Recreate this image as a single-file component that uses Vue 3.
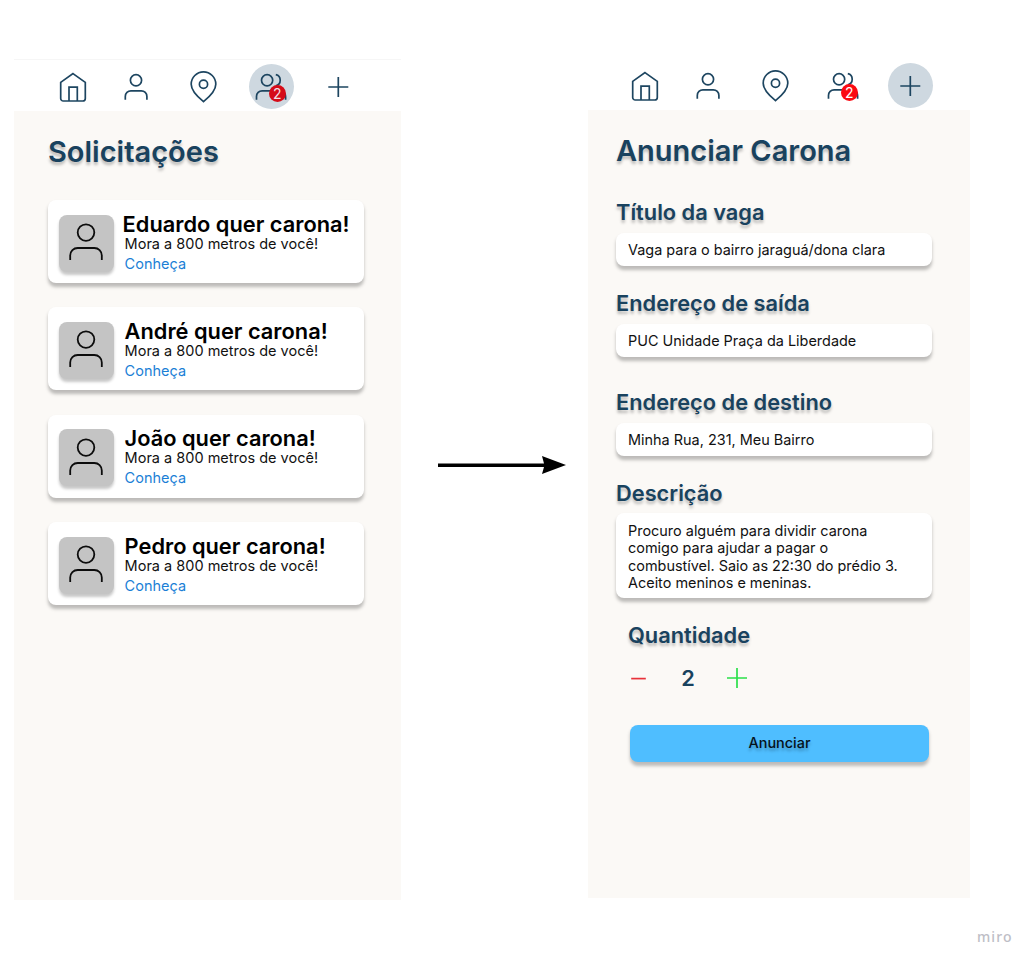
<script setup>
const navIcons = ['home', 'user', 'pin', 'users', 'plus']

const screens = [
  { id: 'requests', active: 'users', title: 'Solicitações' },
  { id: 'publish', active: 'plus', title: 'Anunciar Carona' },
]

const requests = [
  { id: 'eduardo', name: 'Eduardo' },
  { id: 'andre', name: 'André' },
  { id: 'joao', name: 'João' },
  { id: 'pedro', name: 'Pedro' },
]

const fields = [
  { id: 'headline', label: 'Título da vaga', value: ['Vaga para o bairro jaraguá/dona clara'] },
  { id: 'from', label: 'Endereço de saída', value: ['PUC Unidade Praça da Liberdade'] },
  { id: 'to', label: 'Endereço de destino', value: ['Minha Rua, 231, Meu Bairro'] },
  {
    id: 'description',
    label: 'Descrição',
    value: [
      'Procuro alguém para dividir carona',
      'comigo para ajudar a pagar o',
      'combustível. Saio as 22:30 do prédio 3.',
      'Aceito meninos e meninas.',
    ],
  },
]
</script>

<template>
  <main class="board">
    <section v-for="screen in screens" :key="screen.id" class="screen" :class="screen.id">
      <nav class="nav">
        <a v-for="icon in navIcons" :key="icon" class="nav-item" :class="{ active: icon === screen.active }">
          <svg class="icon" viewBox="0 0 45 45">
            <template v-if="icon === 'home'">
              <path d="M22 9.6 L34.3 18.4 V34.4 a2.6 2.6 0 0 1 -2.6 2.6 H12.3 a2.6 2.6 0 0 1 -2.6 -2.6 V18.4 Z" />
              <path d="M18 37 V23.2 H26.3 V37" />
            </template>
            <template v-else-if="icon === 'user'">
              <circle cx="22" cy="16.3" r="5.6" />
              <path d="M11.3 35.8 V32.4 a5.6 5.6 0 0 1 5.6 -5.6 H27.3 a5.6 5.6 0 0 1 5.6 5.6 V35.8" />
            </template>
            <template v-else-if="icon === 'pin'">
              <circle cx="22.5" cy="20.2" r="4.1" />
              <path d="M22.5 37.6 C18.3 34.2 10.2 27.5 10.2 20.2 A12.3 12.3 0 0 1 34.8 20.2 C34.8 27.5 26.7 34.2 22.5 37.6 Z" />
            </template>
            <template v-else-if="icon === 'users'">
              <circle cx="18.1" cy="16.3" r="5.6" />
              <path d="M7.5 35.8 V32.4 a5.6 5.6 0 0 1 5.6 -5.6 H23.4 a5.6 5.6 0 0 1 5.6 5.6 V35.8" />
              <path d="M26.8 10.7 a5.7 5.7 0 0 1 0 11.1" />
              <path d="M33 27.3 a6 6 0 0 1 3.6 5.6 V35.8" />
            </template>
            <path v-else d="M12.3 23 H32.3 M22.3 13 V33" />
          </svg>
          <span v-if="icon === 'users'" class="badge">2</span>
        </a>
      </nav>

      <div class="panel">
        <h1 class="title">{{ screen.title }}</h1>

        <div v-if="screen.id === 'requests'" class="cards">
          <article v-for="r in requests" :key="r.id" class="card">
            <div class="avatar">
              <svg class="avatar-icon" viewBox="0 0 34 38">
                <circle cx="17" cy="9.6" r="8.3" />
                <path d="M1.2 37 V32.5 a7.5 7.5 0 0 1 7.5 -7.5 H25.3 a7.5 7.5 0 0 1 7.5 7.5 V37" />
              </svg>
            </div>
            <div class="info">
              <h2 class="name" :class="r.id">{{ r.name }} quer carona!</h2>
              <p class="distance">Mora a 800 metros de você!</p>
              <a class="more">Conheça</a>
            </div>
          </article>
        </div>

        <form v-else class="form">
          <div v-for="f in fields" :key="f.id" class="field" :class="f.id">
            <h3 class="label">{{ f.label }}</h3>
            <div class="input">
              <div v-for="line in f.value" :key="line">{{ line }}</div>
            </div>
          </div>
          <div class="quantity">
            <h3 class="label">Quantidade</h3>
            <div class="stepper">
              <svg class="step minus" viewBox="0 0 20 20"><path d="M2.2 10.6 H16.8" /></svg>
              <span class="count">2</span>
              <svg class="step plus" viewBox="0 0 20 20"><path d="M0 10 H20 M10 0 V20" /></svg>
            </div>
          </div>
          <button type="button" class="submit">Anunciar</button>
        </form>
      </div>
    </section>

    <svg class="arrow" viewBox="0 0 130 20">
      <path d="M0 8.4 H106 L104 1 L128 10 L104 19 L106 12 H0 Z" />
    </svg>
    <div class="brand">miro</div>
  </main>
</template>

<style>
body {
  margin: 0;
  background: #fff;
}
</style>

<style scoped>
.board {
  box-sizing: border-box;
  position: relative;
  display: flex;
  align-items: flex-start;
  gap: 187px;
  width: 1034px;
  height: 966px;
  padding-left: 14px;
  overflow: hidden;
  background: #fff;
  font-family: Inter, "Liberation Sans", sans-serif;
  color: #111;
}

h1, h2, h3, p {
  margin: 0;
  font-weight: 600;
  white-space: nowrap;
}

.screen {
  display: flex;
  flex-direction: column;
}
.requests { width: 387px; padding-top: 59px; }
.publish { width: 382px; padding-top: 58px; }

.nav {
  box-sizing: border-box;
  display: grid;
  grid-template-columns: 58px 68px 67px 68px 67px;
  justify-items: center;
  height: 52px;
  padding-top: 5px;
}
.requests .nav { padding-left: 30px; border-top: 1px solid #f6f6f6; padding-top: 4px; }
.publish .nav { padding-left: 28px; }

.nav-item {
  position: relative;
  width: 45px;
  height: 45px;
  border-radius: 50%;
}
.nav-item.active { background: #ced8e0; }

.icon {
  display: block;
  width: 45px;
  height: 45px;
  fill: none;
  stroke: #1d4560;
  stroke-width: 1.7;
}

.badge {
  position: absolute;
  left: 20.3px;
  top: 21.2px;
  width: 17px;
  height: 17px;
  border-radius: 50%;
  background: #fb0a12;
  color: #fff;
  font-size: 14px;
  line-height: 17px;
  text-align: center;
}
.active .badge { background: #d50b18; color: #f0dfe3; }

.panel {
  box-sizing: border-box;
  background: #fbf9f6;
}
.requests .panel { height: 789px; padding: 23px 0 0 34px; }
.publish .panel { height: 788px; padding: 23px 0 0 28px; }

.title {
  height: 35px;
  font-size: 29px;
  line-height: 35px;
  color: #19425e;
  text-shadow: 0 3px 3px rgba(0, 0, 0, 0.25);
}

.cards {
  display: flex;
  flex-direction: column;
  gap: 24.4px;
  padding-top: 31px;
}
.card {
  box-sizing: border-box;
  display: flex;
  width: 315.5px;
  height: 83px;
  padding: 14.5px 0 0 11.3px;
  border-radius: 8px;
  background: #fff;
  box-shadow: 0 3.5px 3.5px rgba(0, 0, 0, 0.25);
}
.avatar {
  box-sizing: border-box;
  width: 55px;
  height: 57px;
  padding: 8.4px 0 0 10px;
  border-radius: 8px;
  background: #c4c4c4;
  box-shadow: 0 3px 3px rgba(0, 0, 0, 0.22);
}
.avatar-icon {
  display: block;
  width: 34px;
  height: 38px;
  fill: none;
  stroke: #0c0c0c;
  stroke-width: 1.8;
}
.info { padding-left: 10.3px; }
.name {
  height: 20px;
  font-size: 21.8px;
  line-height: 18.6px;
  color: #000;
}
.name.eduardo { margin-left: -2px; }
.distance {
  font-size: 14.5px;
  font-weight: 400;
  line-height: 18px;
}
.more {
  display: block;
  font-size: 14.5px;
  line-height: 21px;
  color: #1b7fd6;
}

.form { padding-top: 31px; }
.label {
  height: 26px;
  font-size: 21.8px;
  line-height: 26px;
  color: #19425e;
  text-shadow: 0 3px 3px rgba(0, 0, 0, 0.25);
}
.field { margin-bottom: 24px; }
.field.from { margin-bottom: 32px; }
.field.description { margin-bottom: 23.5px; }
.input {
  box-sizing: border-box;
  width: 316px;
  height: 33px;
  margin-top: 8px;
  padding: 7.5px 12px;
  border-radius: 8px;
  background: #fff;
  box-shadow: 0 3.5px 3.5px rgba(0, 0, 0, 0.25);
  font-size: 14.45px;
  line-height: 17.3px;
  white-space: nowrap;
}
.description .input { height: 85px; margin-top: 7px; padding-top: 9px; }

.quantity { padding-left: 12px; }
.stepper {
  display: flex;
  align-items: center;
  height: 26px;
  margin-top: 17px;
}
.step {
  width: 20px;
  height: 20px;
  fill: none;
  stroke-width: 1.7;
}
.minus { margin-left: 1px; stroke: #e8323a; }
.plus { stroke: #2be04a; }
.count {
  width: 78px;
  font-size: 21.8px;
  font-weight: 600;
  text-align: center;
  color: #19425e;
}
.submit {
  display: block;
  width: 299px;
  height: 37px;
  margin: 34px 0 0 14px;
  padding: 0 0 2px;
  border: 0;
  border-radius: 8px;
  background: #4fbeff;
  box-shadow: 0 3.5px 3.5px rgba(0, 0, 0, 0.25);
  font-family: inherit;
  font-size: 14.45px;
  font-weight: 500;
  color: #06121c;
  text-shadow: 0 3px 3px rgba(0, 0, 0, 0.25);
}

.arrow {
  position: absolute;
  left: 438px;
  top: 455px;
  width: 130px;
  height: 20px;
}
.brand {
  position: absolute;
  left: 977px;
  top: 928px;
  font-family: "Noto Sans", sans-serif;
  font-size: 14px;
  font-weight: 500;
  line-height: 18px;
  letter-spacing: 1.1px;
  color: #bebec6;
}
</style>
